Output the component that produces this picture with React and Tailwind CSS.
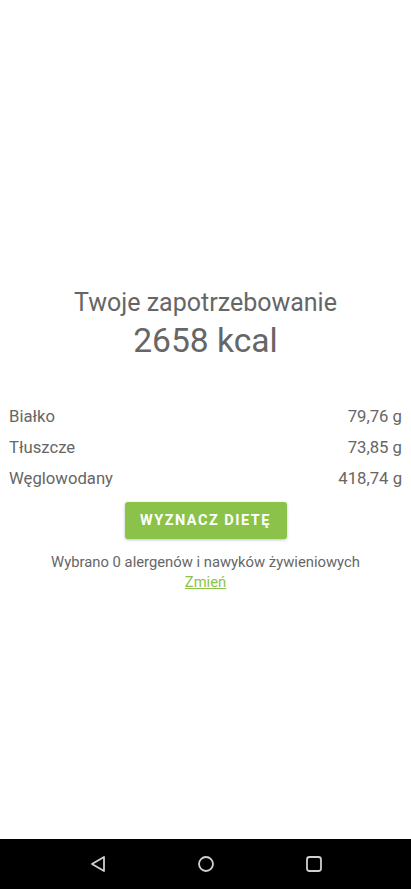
export default function App() {
  const rows = [
    ["Białko", "79,76 g"],
    ["Tłuszcze", "73,85 g"],
    ["Węglowodany", "418,74 g"],
  ];
  return (
    <div className="w-[411px] h-[889px] bg-white flex flex-col text-[#666666]" style={{ fontFamily: "Roboto, 'Noto Sans', sans-serif" }}>
      <div className="flex-1 flex flex-col items-center pt-[289px]">
        <div className="text-[25px] leading-[28px]">Twoje zapotrzebowanie</div>
        <div className="text-[33.6px] leading-[40px] mt-[4px]">2658 kcal</div>
        <div className="w-full px-[9px] mt-[40px] flex flex-col">
          {rows.map(([l, v]) => (
            <div key={l} className="h-[31px] flex items-center justify-between text-[16.7px]">
              <span>{l}</span>
              <span>{v}</span>
            </div>
          ))}
        </div>
        <button className="mt-[8px] w-[162px] h-[37px] rounded-[3px] bg-[#8bc34a] text-white font-bold text-[14.5px] tracking-[1.5px] shadow-[0_1px_3px_rgba(0,0,0,0.25)]">
          WYZNACZ DIETĘ
        </button>
        <div className="mt-[13px] text-[14.8px] leading-[20px]">Wybrano 0 alergenów i nawyków żywieniowych</div>
        <div className="text-[14.8px] leading-[20px] text-[#8bc34a] underline">Zmień</div>
      </div>
      <div className="h-[50px] bg-black flex items-center justify-center gap-[0px]">
        <div className="w-[108px] flex justify-center">
          <svg width="18" height="18" viewBox="0 0 18 18" fill="none" stroke="#d0d0d0" strokeWidth="1.8" strokeLinejoin="round">
            <path d="M15 2 L3 9 L15 16 Z" />
          </svg>
        </div>
        <div className="w-[108px] flex justify-center">
          <svg width="18" height="18" viewBox="0 0 18 18" fill="none" stroke="#d0d0d0" strokeWidth="1.8">
            <circle cx="9" cy="9" r="7" />
          </svg>
        </div>
        <div className="w-[108px] flex justify-center">
          <svg width="18" height="18" viewBox="0 0 18 18" fill="none" stroke="#d0d0d0" strokeWidth="1.8">
            <rect x="2" y="2" width="14" height="14" rx="2.5" />
          </svg>
        </div>
      </div>
    </div>
  );
}
